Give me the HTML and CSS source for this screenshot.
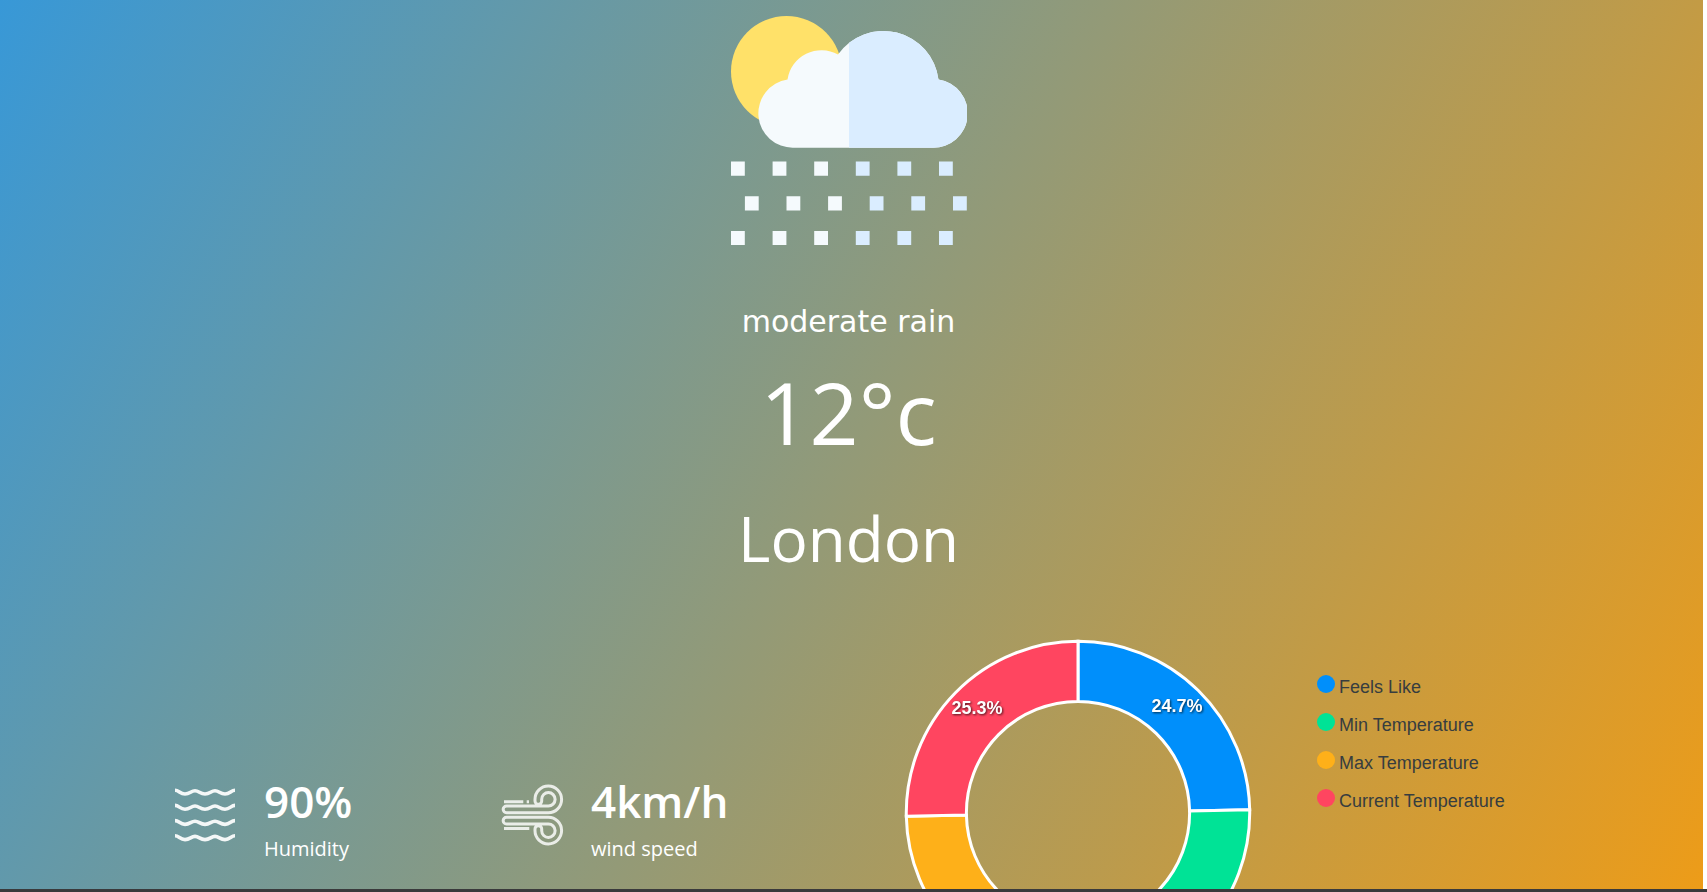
FILE: index.html
```html
<!DOCTYPE html>
<html lang="en">
<head>
<meta charset="utf-8">
<title>Weather</title>
<link rel="stylesheet" href="styles.css">
</head>
<body>
<main class="weather">
  <section class="current">
    <svg class="current-icon" viewBox="0 0 236 230" role="img" aria-label="Rain with sun">
      <defs>
        <clipPath id="right-half"><rect x="118" y="0" width="118" height="230"/></clipPath>
        <path id="cloud" d="M62.5 131.7A34.3 34.3 0 0 1 56.5 63.5A34.3 34.3 0 0 1 107 38.5A55.5 55.5 0 0 1 207.5 63.5A34.3 34.3 0 0 1 201.2 131.7Z"/>
      </defs>
      <circle cx="55.5" cy="55.5" r="55.5" fill="#ffe169"/>
      <use href="#cloud" fill="#f5fafd"/>
      <use href="#cloud" fill="#daedff" clip-path="url(#right-half)"/>
      <path fill="#f5fafd" d="M0 145.6h13.8v14.2H0zM41.6 145.6h13.8v14.2H41.6zM83.2 145.6H97v14.2H83.2zM13.9 180.3h13.8v14.2H13.9zM55.5 180.3h13.8v14.2H55.5zM97.1 180.3h13.8v14.2H97.1zM0 214.9h13.8v14.2H0zM41.6 214.9h13.8v14.2H41.6zM83.2 214.9H97v14.2H83.2z"/>
      <path fill="#daedff" d="M124.8 145.6h13.8v14.2h-13.8zM166.4 145.6h13.8v14.2h-13.8zM208 145.6h13.8v14.2H208zM138.7 180.3h13.8v14.2h-13.8zM180.3 180.3h13.8v14.2h-13.8zM222 180.3h13.8v14.2H222zM124.8 214.9h13.8v14.2h-13.8zM166.4 214.9h13.8v14.2h-13.8zM208 214.9h13.8v14.2H208z"/>
    </svg>
    <p class="description">moderate rain</p>
    <p class="temperature">12°c</p>
    <h1 class="city">London</h1>
  </section>

  <section class="details">
    <div class="stat">
      <svg class="stat-icon" viewBox="0 0 60 60" aria-hidden="true">
        <g fill="none" stroke="#fff" stroke-opacity=".92" stroke-width="3.6">
          <path id="wave" d="M0 5.2C4 5.2 5 9 10 9S16 5.8 20 5.8 25 9 30 9S36 5.8 40 5.8 45 9 50 9S56 5.2 60 5.2"/>
          <use href="#wave" y="15.2"/>
          <use href="#wave" y="30.4"/>
          <use href="#wave" y="45.6"/>
        </g>
      </svg>
      <div>
        <p class="stat-value">90%</p>
        <p class="stat-label">Humidity</p>
      </div>
    </div>
    <div class="stat">
      <svg class="stat-icon" viewBox="0 0 60 60" aria-hidden="true">
        <g fill="none" stroke="#fff" stroke-opacity=".82" stroke-width="3">
          <path d="M46.3 27.7A13.3 13.3 0 1 0 33 14.3V16A3.3 3.3 0 0 0 39.7 16V14.3A6.7 6.7 0 1 1 46.3 21H4.5A3.35 3.35 0 0 0 4.5 27.7Z"/>
          <path d="M46.3 32.3A13.3 13.3 0 1 1 33 45.7V44A3.3 3.3 0 0 1 39.7 44V45.7A6.7 6.7 0 1 0 46.3 39H4.5A3.35 3.35 0 0 1 4.5 32.3Z"/>
          <path d="M2 16.7H21.3M24.7 16.7H27M2 43.4H27.3"/>
        </g>
      </svg>
      <div>
        <p class="stat-value">4km/h</p>
        <p class="stat-label">wind speed</p>
      </div>
    </div>
    <div class="chart">
      <svg class="donut" viewBox="0 0 348 348" role="img" aria-label="Temperature shares">
        <g stroke="#fff" stroke-width="3">
          <path fill="#008ffb" d="M174 2.3A171.7 171.7 0 0 1 345.7 170.8L285.6 171.9A111.6 111.6 0 0 0 174 62.4Z"/>
          <path fill="#00e396" d="M345.7 170.8A171.7 171.7 0 0 1 177 345.6L176 285.6A111.6 111.6 0 0 0 285.6 171.9Z"/>
          <path fill="#feb019" d="M177 345.6A171.7 171.7 0 0 1 2.3 177.2L62.4 176.1A111.6 111.6 0 0 0 176 285.6Z"/>
          <path fill="#ff4560" d="M2.3 177.2A171.7 171.7 0 0 1 174 2.3V62.4A111.6 111.6 0 0 0 62.4 176.1Z"/>
        </g>
        <g class="share" text-anchor="middle">
          <text x="273" y="73">24.7%</text>
          <text x="73" y="75">25.3%</text>
        </g>
      </svg>
      <ul class="legend">
        <li class="legend-item feels">Feels Like</li>
        <li class="legend-item min">Min Temperature</li>
        <li class="legend-item max">Max Temperature</li>
        <li class="legend-item now">Current Temperature</li>
      </ul>
    </div>
  </section>
</main>
<div class="bottom-edge"></div>
</body>
</html>
```
FILE: styles.css
```css
* {
  box-sizing: border-box;
  margin: 0;
  padding: 0;
}

body {
  display: flex;
  flex-direction: column;
  height: 100vh;
  overflow: hidden;
  background: #fff;
  color: #fff;
  font-family: "Segoe UI", "Open Sans", "Noto Sans", sans-serif;
}

.weather {
  flex: 1;
  min-height: 0;
  margin-right: 4px;
  overflow: hidden;
  background: linear-gradient(120deg, #3498db, #f39c12) 0 -80px / 100% 1100px;
}

.bottom-edge {
  flex: none;
  height: 3px;
  background: #3a3a3c;
}

.current {
  display: flex;
  flex-direction: column;
  align-items: center;
  padding: 16px 6px 0 0;
}

.current-icon {
  width: 236px;
  height: 230px;
}

.description {
  margin-top: 56px;
  font-family: Verdana, "DejaVu Sans", sans-serif;
  font-size: 30px;
  line-height: 40px;
}

.temperature {
  margin-top: 10px;
  font-size: 86px;
  line-height: 120px;
}

.city {
  margin-top: 24px;
  font-size: 62px;
  font-weight: 400;
  line-height: 84px;
}

.details {
  display: grid;
  grid-template-columns: 327fr 402fr 799fr;
  margin-top: 59px;
  padding-left: 175px;
}

.stat {
  display: flex;
  align-items: flex-start;
  gap: 29px;
  padding-top: 137px;
}

.stat-icon {
  width: 60px;
  height: 60px;
  margin-top: 9px;
  overflow: visible;
}

.stat-value {
  font-size: 44px;
  font-weight: 600;
  line-height: 50px;
}

.stat-label {
  margin-top: 7px;
  font-size: 20px;
  line-height: 32px;
}

.chart {
  display: flex;
  align-items: flex-start;
  gap: 65px;
}

.donut {
  flex: none;
  width: 348px;
  height: 348px;
}

.share {
  fill: #fff;
  font: 700 18px Helvetica, "Liberation Sans", Arial, sans-serif;
  filter: drop-shadow(1px 1px 1px rgba(0, 0, 0, 0.7));
}

.legend {
  padding-top: 36px;
  color: #373d3f;
  font: 18px/24px Helvetica, "Liberation Sans", Arial, sans-serif;
  list-style: none;
}

.legend-item {
  display: flex;
  gap: 4px;
  margin-bottom: 14px;
  white-space: nowrap;
}

.legend-item::before {
  width: 18px;
  height: 18px;
  border-radius: 50%;
  background: currentColor;
  content: "";
}

.feels::before {
  background: #008ffb;
}

.min::before {
  background: #00e396;
}

.max::before {
  background: #feb019;
}

.now::before {
  background: #ff4560;
}
```
